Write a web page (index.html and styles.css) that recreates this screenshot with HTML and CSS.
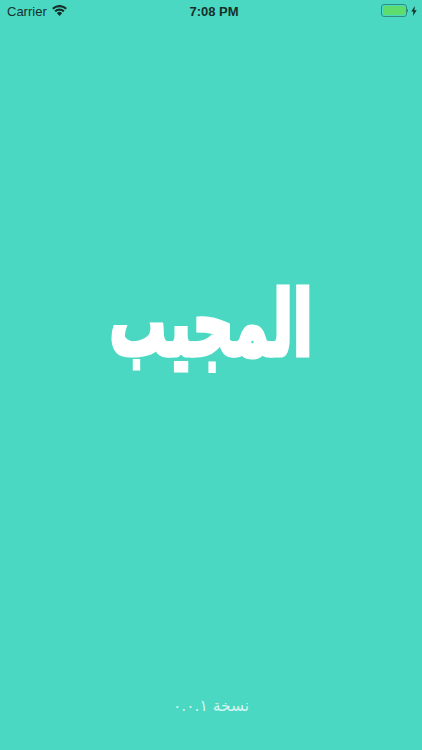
FILE: index.html
```html
<!DOCTYPE html>
<html lang="ar">

<head>
    <meta charset="UTF-8">
    <meta name="viewport" content="width=device-width, initial-scale=1.0">
    <title>المجيب</title>
    <link rel="stylesheet" href="styles.css">
</head>

<body>
    <div class="status-bar">
        <div class="status-left">
            <span>Carrier</span>
            <svg class="wifi" viewBox="0 0 15 11" width="15" height="11">
                <path d="M7.5 11 4.9 8.2a3.6 3.6 0 0 1 5.2 0Z" fill="#15302b"/>
                <path d="M3.9 7.2 2.4 5.6a7.2 7.2 0 0 1 10.2 0L11.1 7.2a5.1 5.1 0 0 0-7.2 0Z" fill="#15302b"/>
                <path d="M1.5 4.6 0 3a10.8 10.8 0 0 1 15 0L13.5 4.6a8.7 8.7 0 0 0-12 0Z" fill="#15302b"/>
            </svg>
        </div>
        <div class="status-time">7:08 PM</div>
        <div class="status-right">
            <div class="battery"><div class="battery-level"></div></div>
            <div class="battery-tip"></div>
            <svg class="bolt" viewBox="0 0 6 10" width="6" height="10">
                <path d="M3.8 0 0.3 5.6h2.1L1.9 10 5.7 4.2H3.4Z" fill="#15302b"/>
            </svg>
        </div>
    </div>
    <main>
        <h1 class="logo">المجيب</h1>
    </main>
    <footer class="version">نسخة ٠.٠.١</footer>
</body>

</html>
```

FILE: styles.css
```css
body {
    margin: 0;
    width: 422px;
    height: 750px;
    overflow: hidden;
    background-color: #4bd8c2;
    color: #fff;
    font-family: "DejaVu Sans", sans-serif;
    display: flex;
    flex-direction: column;
}
.status-bar {
    height: 22px;
    padding: 0 5px 0 7px;
    display: grid;
    grid-template-columns: 1fr auto 1fr;
    align-items: center;
    color: #15302b;
    font-family: "Liberation Sans", sans-serif;
    font-size: 13px;
}
.status-left {
    display: flex;
    align-items: center;
    gap: 5px;
}
.wifi {
    margin-bottom: 1px;
}
.status-time {
    font-weight: bold;
    margin-left: 4px;
}
.status-right {
    display: flex;
    align-items: center;
    justify-content: flex-end;
    padding-bottom: 1px;
}
.battery {
    width: 22px;
    height: 9px;
    padding: 1px;
    border: 1px solid #2f8f7e;
    border-radius: 3px;
}
.battery-level {
    height: 100%;
    background-color: #5fdc6e;
    border-radius: 2px;
}
.battery-tip {
    width: 1px;
    height: 3px;
    background-color: #2f8f7e;
    margin-right: 3px;
}
main {
    height: 604px;
    display: flex;
    align-items: center;
    justify-content: center;
}
.logo {
    margin: 0;
    font-size: 90px;
    font-weight: bold;
    line-height: 1;
    -webkit-text-stroke: 5px #fff;
    transform: scaleX(0.63);
}
.version {
    margin-top: 71px;
    text-align: center;
    font-size: 15.5px;
    color: #d4f5ef;
    direction: rtl;
}
```
